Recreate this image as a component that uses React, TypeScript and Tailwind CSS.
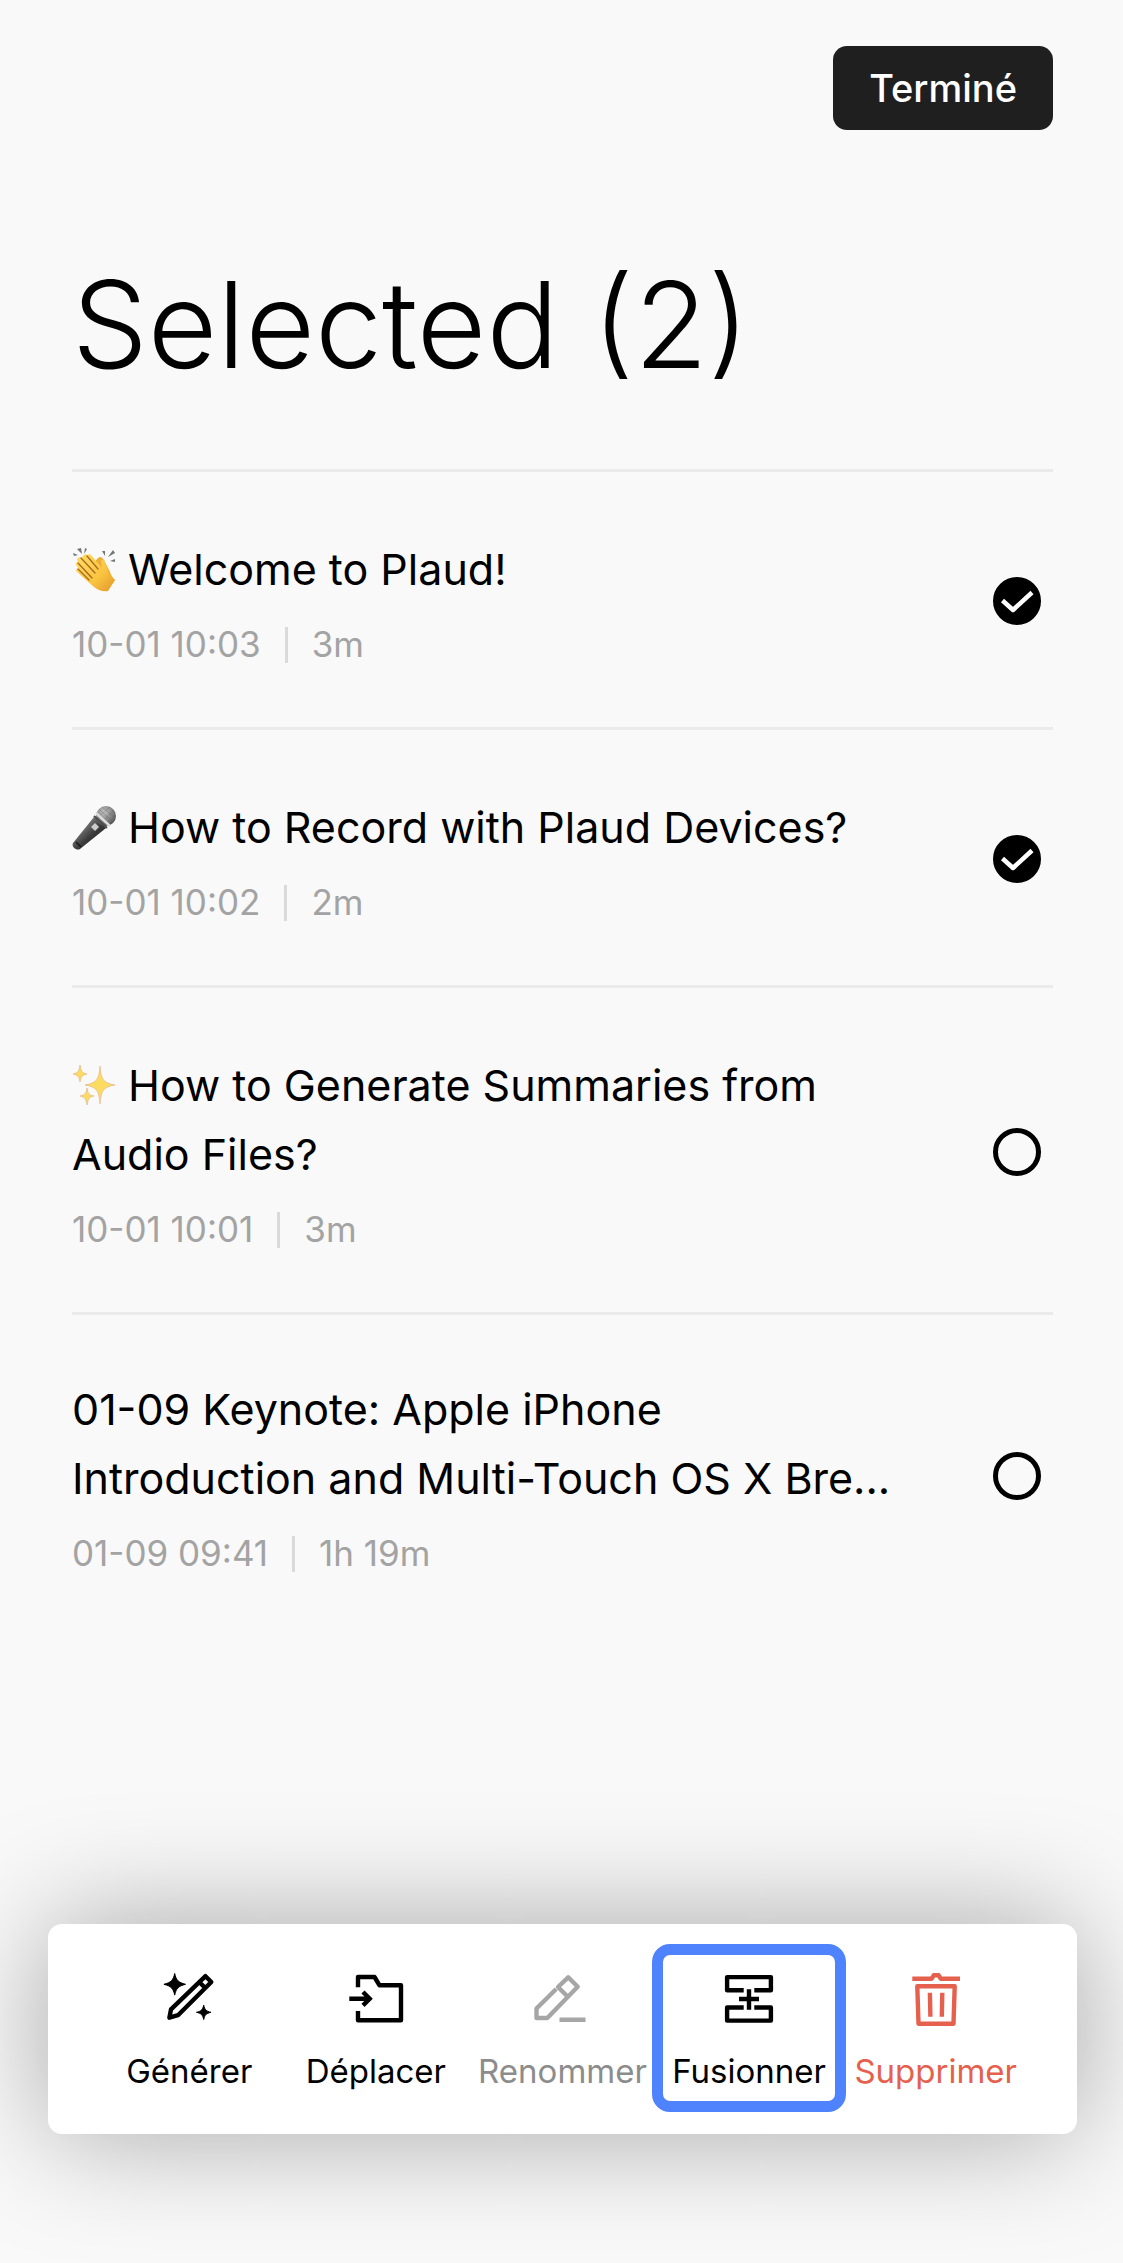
import { useState } from "react";
import type { ReactNode } from "react";

type Recording = {
  id: number;
  emoji?: ReactNode;
  title: string;
  date: string;
  length: string;
};

const ClapEmoji = () => (
  <svg viewBox="0 0 44 46" className="h-[46px] w-[44px]" aria-hidden="true">
    <defs>
      <linearGradient id="skin" x1="0" y1="0" x2="1" y2="1">
        <stop offset="0" stopColor="#ffdc6b" />
        <stop offset="0.6" stopColor="#f9c440" />
        <stop offset="1" stopColor="#e2962b" />
      </linearGradient>
    </defs>
    <g fill="#70757a">
      <path d="M1 6l5 2-4 1zM5 2l4-1 1 6zM13 1l2 1-3 5zM30 4l3 0 0 5zM41 3l2 3-7 4zM43 12l0 3-5-1z" />
    </g>
    <path
      d="M26 11c2-2 4-1 6 2l6 12c1 3 2 5 5 8l-8 11-9-4-8-20z"
      fill="#eeae35"
    />
    <path
      d="M5 12c1-2 3-2 4-1l2-2c1-2 3-2 4-1 2-1 3-1 4 0l11 13-1-6c0-3 3-3 4 0l4 12 6 6-7 11c-6 1-10-1-14-4L5 25c-2-2 0-4 2-3l-3-4c-1-2 1-3 2-2z"
      fill="url(#skin)"
    />
    <path
      d="M9 11l14 15M6 16l14 15M6 22l11 11M15 9l11 13"
      fill="none"
      stroke="#a9691c"
      strokeWidth="1.3"
      strokeLinecap="round"
    />
  </svg>
);

const MicEmoji = () => (
  <svg viewBox="0 0 44 46" className="h-[46px] w-[44px]" aria-hidden="true">
    <defs>
      <linearGradient id="micBody" x1="0" y1="0" x2="1" y2="1">
        <stop offset="0.3" stopColor="#777" />
        <stop offset="0.55" stopColor="#3c3c3c" />
        <stop offset="0.8" stopColor="#222" />
      </linearGradient>
      <radialGradient id="micHead" cx="0.4" cy="0.3" r="0.7">
        <stop offset="0" stopColor="#c4c4c4" />
        <stop offset="0.6" stopColor="#858585" />
        <stop offset="1" stopColor="#555" />
      </radialGradient>
    </defs>
    <path d="M22 12l12 11L8 44c-3 2-9-2-7-6z" fill="url(#micBody)" />
    <circle cx="34" cy="11" r="10" fill="url(#micHead)" />
    <path
      d="M27 4l14 13M30 2l13 11M26 9l11 11M42 5L29 18M38 2L25 13"
      stroke="#666"
      strokeWidth="0.7"
      opacity="0.6"
    />
    <path d="M24 8l14 13" stroke="#ddd" strokeWidth="2.4" />
    <path d="M22 11l13 12" stroke="#4b4b4b" strokeWidth="2" />
    <path d="M23 18l4 4-4 4-4-4z" fill="#ccc" />
    <path d="M4 37l5 5" stroke="#151515" strokeWidth="1.4" />
  </svg>
);

const SparklesEmoji = () => (
  <svg viewBox="0 0 44 46" className="h-[46px] w-[44px]" aria-hidden="true">
    <g fill="#fbdb62" stroke="#e8b482" strokeWidth="0.7">
      <path d="M28 3c1 13 3 17 15 19-12 2-14 6-15 19-1-13-3-17-15-19 12-2 14-6 15-19z" />
      <path d="M8 2c1 6 2 8 7 9-5 1-6 3-7 8-1-5-2-7-7-8 5-1 6-3 7-9z" />
      <path d="M15 25c1 6 2 7 7 8-5 1-6 3-7 9-1-6-2-8-7-9 5-1 6-2 7-8z" />
    </g>
  </svg>
);

const recordings: Recording[] = [
  { id: 1, emoji: <ClapEmoji />, title: "Welcome to Plaud!", date: "10-01 10:03", length: "3m" },
  { id: 2, emoji: <MicEmoji />, title: "How to Record with Plaud Devices?", date: "10-01 10:02", length: "2m" },
  { id: 3, emoji: <SparklesEmoji />, title: "How to Generate Summaries from Audio Files?", date: "10-01 10:01", length: "3m" },
  { id: 4, title: "01-09 Keynote: Apple iPhone Introduction and Multi-Touch OS X Bre...", date: "01-09 09:41", length: "1h 19m" },
];

const GenerateIcon = () => (
  <>
    <path
      d="M15.7 4.5c1.4 6.6 3.6 9 10.8 10.8-7.2 1.8-9.4 4.2-10.8 10.8-1.4-6.6-3.6-9-10.8-10.8 7.2-1.8 9.4-4.2 10.8-10.8zM44.7 36.2c1 4.6 2.5 6 7.2 7.1-4.7 1.1-6.2 2.6-7.2 7.2-1-4.6-2.5-6.1-7.2-7.2 4.7-1.1 6.2-2.5 7.2-7.1z"
      fill="currentColor"
      strokeWidth="1"
    />
    <path d="M46.5 7.2L52.3 13 19 46.2l-8.6 2.5 1.6-8.3zM40.5 13.2l5.8 5.8" />
  </>
);

const MoveIcon = () => (
  <>
    <path d="M12 18.3V8h16.5l5 8.3H55v35H12V42" />
    <path d="M3.3 29.7H23M17 23l6.7 6.7-6.7 6.7" strokeLinejoin="miter" />
  </>
);

const RenameIcon = () => (
  <path d="M24.2 20L4.5 39.5V49h10.8l30.4-31.2-9.5-9.5L26 18l9.5 9.5M27.5 50.8h26" />
);

const MergeIcon = () => (
  <>
    <path d="M24.7 21.2H8.1V8.1h43.8v13.1H35.3M24.7 38.5H8.1v13.1h43.8V38.5H35.3" />
    <path d="M30 20.3v20.4M20 30h20" />
  </>
);

const DeleteIcon = () => (
  <path d="M6.3 9.7h19.4l2-3.4h5l2 3.4H54M11.3 17.2h37.4l-1.2 37.6H12.5zM23.9 23.7l.5 24M36.3 23.7l-.5 24" />
);

const actions = [
  { label: "Générer", icon: <GenerateIcon />, color: "text-black" },
  { label: "Déplacer", icon: <MoveIcon />, color: "text-black" },
  { label: "Renommer", icon: <RenameIcon />, color: "text-[#8c8c8c]", iconColor: "text-[#a6a6a6]", disabled: true },
  { label: "Fusionner", icon: <MergeIcon />, color: "text-black", highlighted: true },
  { label: "Supprimer", icon: <DeleteIcon />, color: "text-[#e5604d]" },
];

export default function App() {
  const [selected, setSelected] = useState<number[]>([1, 2]);

  const toggle = (id: number) => {
    setSelected(prev => (prev.includes(id) ? prev.filter(x => x !== id) : [...prev, id]));
  };

  return (
    <div className="flex min-h-screen flex-col bg-[#f9f9f9] font-['Inter',sans-serif] text-black">
      <header className="flex justify-end px-[70px] pt-[46px]">
        <button
          type="button"
          className="h-[84px] rounded-[14px] bg-[#1f1f1f] px-9 text-[38px] font-medium text-white"
        >
          Terminé
        </button>
      </header>

      <main className="pr-[70px] pl-[72px]">
        <h1 className="mt-[120px] mb-[69px] text-[120px] leading-[150px] font-light">
          Selected ({selected.length})
        </h1>

        <ul>
          {recordings.map(rec => (
            <li key={rec.id} className="border-t-3 border-[#ebebeb]">
              <label
                htmlFor={`rec-${rec.id}`}
                className={`flex items-center justify-between pr-3 pb-[60px] ${
                  rec.emoji ? "pt-[63px]" : "pt-[60px]"
                }`}
              >
                <div className="max-w-[830px]">
                  <h2 className="text-[43px] leading-[69px]">
                    {rec.emoji && (
                      <span className="mr-3 inline-block pb-1.5 align-middle">{rec.emoji}</span>
                    )}
                    {rec.title}
                  </h2>
                  <div className="mt-[18px] flex items-center gap-6 text-[35px] leading-[45px] text-[#a3a3a3]">
                    <span>{rec.date}</span>
                    <span className="h-9 w-[3px] bg-[#dadada]" />
                    <span>{rec.length}</span>
                  </div>
                </div>
                <span className="grid size-12 shrink-0">
                  <input
                    id={`rec-${rec.id}`}
                    type="checkbox"
                    checked={selected.includes(rec.id)}
                    onChange={() => toggle(rec.id)}
                    className="peer col-start-1 row-start-1 size-12 appearance-none rounded-full border-[5px] border-black checked:bg-black"
                  />
                  <svg
                    viewBox="0 0 48 48"
                    className="pointer-events-none invisible col-start-1 row-start-1 size-12 peer-checked:visible"
                    fill="none"
                    stroke="#fff"
                    strokeWidth="4.5"
                    aria-hidden="true"
                  >
                    <path d="M9.5 23.5L20 33l19-17.5" strokeLinejoin="round" />
                  </svg>
                </span>
              </label>
            </li>
          ))}
        </ul>
      </main>

      <nav className="mt-auto mr-[46px] mb-[129px] ml-12 grid grid-cols-5 rounded-[14px] bg-white px-12 shadow-[0_0_120px_rgba(0,0,0,0.34)]">
        {actions.map(action => (
          <button
            key={action.label}
            type="button"
            disabled={action.disabled}
            className={`relative flex flex-col items-center gap-[21px] pt-[45px] pb-[42px] text-[33px] leading-[42px] ${action.color}`}
          >
            <svg
              viewBox="0 0 60 60"
              className={`size-[60px] ${action.iconColor ?? ""}`}
              fill="none"
              stroke="currentColor"
              strokeWidth="4.4"
              strokeLinejoin="round"
              aria-hidden="true"
            >
              {action.icon}
            </svg>
            {action.label}
            {action.highlighted && (
              <span className="absolute -inset-x-1 top-5 bottom-[22px] rounded-[18px] border-[11px] border-[#4f83fd]" />
            )}
          </button>
        ))}
      </nav>
    </div>
  );
}
